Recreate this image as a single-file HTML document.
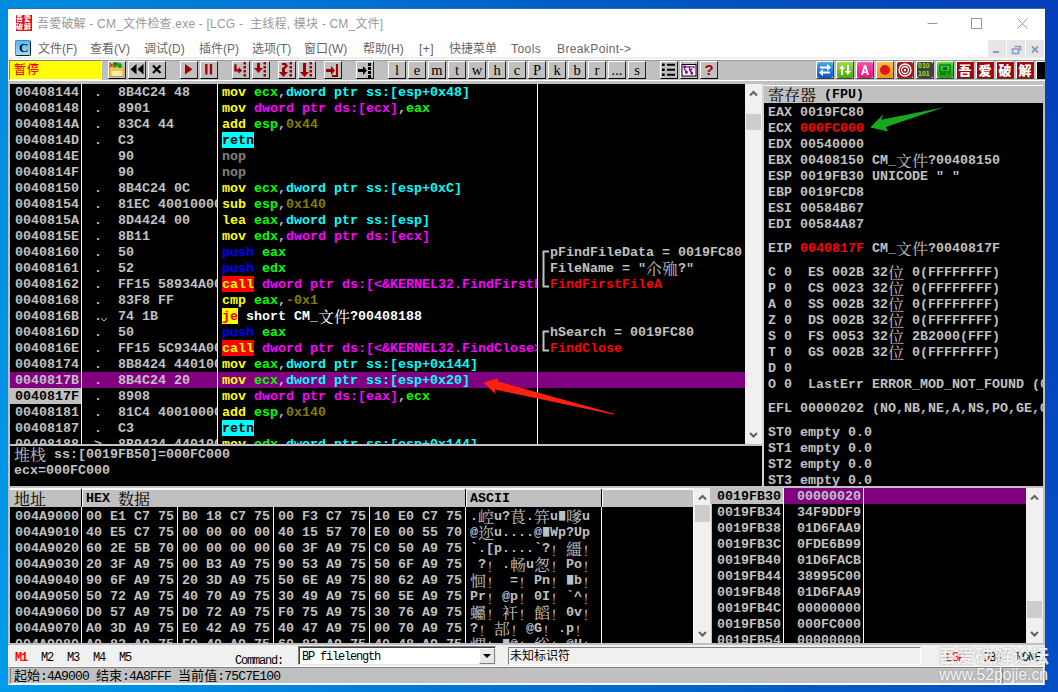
<!DOCTYPE html><html><head><meta charset="utf-8"><title>OllyDbg</title><style>
html,body{margin:0;padding:0}
body{width:1058px;height:692px;overflow:hidden;position:relative;background:linear-gradient(180deg,rgba(0,0,80,.07),rgba(0,255,255,.07)),linear-gradient(92deg,#0096ea 0%,#007bdb 30%,#0062cb 55%,#044dc2 80%,#0442c2 100%);font-family:"Liberation Sans","Noto Sans CJK SC",sans-serif}
div,span,svg{position:absolute;box-sizing:border-box}
.t{font-family:"Liberation Mono","Noto Serif CJK SC",monospace;font-weight:bold;font-size:13.33px;line-height:18px;height:16px;white-space:pre;color:#c0c0c0;overflow:hidden}
.t span{position:static;display:inline-block;vertical-align:top;height:16px;line-height:18px}
.t .cj{font-family:"Noto Serif CJK SC","Noto Sans CJK SC",serif;font-weight:400;font-size:16px;line-height:17px;width:16px;text-align:center}
.y{color:#ffff00}.g{color:#00ff00}.c{color:#00ffff}.m{color:#ff00ff}.o{color:#808000}.r{color:#ff0000}.b{color:#0000ff}.n{color:#808080}.w{color:#c0c0c0}.k{color:#000}.wh{color:#fff}
.ret{background:#00ffff;color:#000}.call{background:#ff0000;color:#ffff00}.je{background:#ffff00;color:#ff0000}
.pane{background:#000;overflow:hidden}
.vl{width:1px;background:#fff}
.hd{background:#c0c0c0;overflow:hidden}
.sb{background:#f0f0f0}
.th{background:#cdcdcd}
.btn{background:#c0c0c0;border-top:1px solid #fff;border-left:1px solid #fff;border-bottom:1px solid #000;border-right:1px solid #202020;width:18px;height:18px;top:61px;overflow:hidden}
.lt{font-family:"Liberation Serif",serif;font-size:14.5px;line-height:16px;color:#000;width:16px;text-align:center;left:0;top:0}
.menu{font-size:12px;line-height:16px;color:#666;top:41px;white-space:pre}
.ss{font-family:"Liberation Mono","Noto Serif CJK SC",monospace;white-space:pre;color:#000}
</style></head><body><div style="left:8px;top:8px;width:1037px;height:677px;background:#fff;border-top:1px solid #2a6db0"></div><div style="left:16px;top:15px;width:16px;height:16px;background:#e01010;overflow:hidden"><span style="left:0;top:0;font-size:7px;line-height:8px;color:#fff;font-weight:bold;width:16px;letter-spacing:1px">吾愛破解</span></div><div style="left:37px;top:16px;font-size:12px;line-height:16px;color:#999;white-space:pre;letter-spacing:.2px" id="title">吾愛破解 - CM_文件检查.exe - [LCG -  主线程, 模块 - CM_文件]</div><svg style="left:920px;top:9px" width="125" height="30" viewBox="0 0 125 30"><path d="M7.5 14.5h10" stroke="#999" fill="none"/><rect x="51.5" y="9.5" width="10" height="10" stroke="#999" fill="none"/><path d="M97.5 9.5l10 10M107.5 9.5l-10 10" stroke="#999" fill="none"/></svg><div style="left:15px;top:40px;width:16px;height:16px;background:linear-gradient(#5bb8f0,#9fd8f8);border:1px solid #3a8fd0;border-radius:2px;border-bottom:1px solid #123;border-right:1px solid #123"><span style="left:3px;top:-1px;font-family:'Liberation Serif',serif;font-weight:bold;font-size:13px;line-height:16px;color:#012">C</span></div><div class="menu" style="left:38px">文件(F)</div><div class="menu" style="left:90px">查看(V)</div><div class="menu" style="left:144px">调试(D)</div><div class="menu" style="left:199px">插件(P)</div><div class="menu" style="left:252px">选项(T)</div><div class="menu" style="left:304px">窗口(W)</div><div class="menu" style="left:363px">帮助(H)</div><div class="menu" style="left:419px;letter-spacing:.5px">[+]</div><div class="menu" style="left:449px">快捷菜单</div><div class="menu" style="left:511px;letter-spacing:.45px">Tools</div><div class="menu" style="left:557px;letter-spacing:.38px">BreakPoint-&gt;</div><div style="left:988px;top:40px;width:18px;height:18px;background:#e6e6e6"></div><div style="left:1007px;top:40px;width:18px;height:18px;background:#e6e6e6"></div><div style="left:1026px;top:40px;width:18px;height:18px;background:#e6e6e6"></div><svg style="left:988px;top:40px" width="57" height="18" viewBox="0 0 57 18"><path d="M5 12h6" stroke="#8d9bbd" stroke-width="2" fill="none"/><path d="M26.5 6.5h6v4M24.5 9h6v4.5h-6z" stroke="#8d9bbd" stroke-width="1.6" fill="none"/><path d="M44 6.5l6 6M50 6.5l-6 6" stroke="#8d9bbd" stroke-width="2" fill="none"/></svg><div style="left:9px;top:57px;width:1036px;height:2px;background:#f0f0f0"></div><div style="left:9px;top:60px;width:1036px;height:21px;background:#c0c0c0;border-top:1px solid #9a9a9a;border-bottom:1px solid #fff"></div><div style="left:8px;top:81px;width:1037px;height:565px;background:#c0c0c0"></div><div style="left:9px;top:60px;width:93px;height:20px;background:#ffff00;border-top:1px solid #808080;border-left:1px solid #808080;border-bottom:1px solid #fff;border-right:1px solid #fff"><span style="left:4px;top:0;font-family:'Noto Sans CJK SC',sans-serif;font-weight:500;font-size:12px;line-height:16px;color:#ff0000;letter-spacing:1px;white-space:pre">暂停</span></div><div class="btn" style="left:108px"><svg style="left:0;top:0" width="16" height="16" viewBox="0 0 16 16"><path d="M0.5 6q0-1.5 1.5-1.5h10.5l2.5 2v6.5q0 1.5-1.5 1.5H2q-1.5 0-1.5-1.5z" fill="#f2c452" stroke="#c8942a" stroke-width=".8"/><path d="M3.2 9h9.3q1.2 0 1 1.2l-.5 2.6q-.2 1.2-1.4 1.2H4.3q-1.2 0-1.4-1.2l-.5-2.6Q2.2 9 3.2 9z" fill="#fce9ae"/><path d="M4 .3h4.2l1.3 1h2l1.3 1.5v2.2l-1 1H9.3l-.5-2H7.5L7 5.5H4.2v-2z" fill="#14a214"/><circle cx="6.2" cy="1.6" r=".7" fill="#000"/><path d="M.5 1l2 2-2 2M2.2 3h3" stroke="#f01010" stroke-width="1.2" fill="none"/></svg></div><div class="btn" style="left:128px"><svg style="left:0;top:0" width="16" height="16" viewBox="0 0 16 16"><path d="M7.5 2v10.5L1.5 7.25zM14.5 2v10.5L8.5 7.25z" fill="#000"/></svg></div><div class="btn" style="left:148px"><svg style="left:0;top:0" width="16" height="16" viewBox="0 0 16 16"><path d="M4 3.5l7.5 7.5M11.5 3.5l-7.5 7.5" stroke="#000" stroke-width="2.2"/></svg></div><div class="btn" style="left:180px"><svg style="left:0;top:0" width="16" height="16" viewBox="0 0 16 16"><path d="M4 2v10.5l7.5-5.25z" fill="#a00000"/></svg></div><div class="btn" style="left:200px"><svg style="left:0;top:0" width="16" height="16" viewBox="0 0 16 16"><rect x="4.2" y="2" width="2.3" height="10.5" fill="#a00000"/><rect x="8.8" y="2" width="2.3" height="10.5" fill="#a00000"/></svg></div><div class="btn" style="left:232px"><svg style="left:0;top:0" width="16" height="16" viewBox="0 0 16 16"><path d="M1.3 2.2h2.3v5h2V5l3.5 3.4-3.5 3.4V9.5H1.3z" fill="#a00000"/><rect x="10.5" y="0" width="2.5" height="2.5" fill="#a00000"/><rect x="10.5" y="4" width="2.5" height="2.5" fill="#a00000"/><rect x="10.5" y="8" width="2.5" height="2.5" fill="#a00000"/><rect x="10.5" y="12" width="2.5" height="2.5" fill="#a00000"/></svg></div><div class="btn" style="left:252px"><svg style="left:0;top:0" width="16" height="16" viewBox="0 0 16 16"><path d="M4 1h3v5h3l-4.5 5L1 6h3z" fill="#a00000"/><rect x="10.5" y="0" width="2.5" height="2.5" fill="#a00000"/><rect x="10.5" y="4" width="2.5" height="2.5" fill="#a00000"/><rect x="10.5" y="8" width="2.5" height="2.5" fill="#a00000"/><rect x="10.5" y="12" width="2.5" height="2.5" fill="#a00000"/></svg></div><div class="btn" style="left:278px"><svg style="left:0;top:0" width="16" height="16" viewBox="0 0 16 16"><path d="M3 1h4l2 3-3 3v3h3l-4.5 5L0 10h3V6l3-2-1-1H3z" fill="#a00000"/><rect x="10.5" y="0" width="2.5" height="2.5" fill="#a00000"/><rect x="10.5" y="4" width="2.5" height="2.5" fill="#a00000"/><rect x="10.5" y="8" width="2.5" height="2.5" fill="#a00000"/><rect x="10.5" y="12" width="2.5" height="2.5" fill="#a00000"/></svg></div><div class="btn" style="left:298px"><svg style="left:0;top:0" width="16" height="16" viewBox="0 0 16 16"><path d="M4 1h3v9h3l-4.5 5L1 10h3z" fill="#a00000"/><rect x="10.5" y="0" width="2.5" height="2.5" fill="#a00000"/><rect x="10.5" y="4" width="2.5" height="2.5" fill="#a00000"/><rect x="10.5" y="8" width="2.5" height="2.5" fill="#a00000"/><rect x="10.5" y="12" width="2.5" height="2.5" fill="#a00000"/></svg></div><div class="btn" style="left:324px"><svg style="left:0;top:0" width="16" height="16" viewBox="0 0 16 16"><path d="M1 7h5V4l4 4.5L6 13v-3H1z" fill="#a00000"/><path d="M12 2v12H7" stroke="#a00000" stroke-width="2" fill="none"/></svg></div><div class="btn" style="left:356px"><svg style="left:0;top:0" width="16" height="16" viewBox="0 0 16 16"><path d="M1 7h5V4l4 4.5L6 13v-3H1z" fill="#000"/><rect x="11" y="1" width="3" height="3" fill="#000"/><rect x="11" y="5" width="3" height="3" fill="#000"/><rect x="11" y="9" width="3" height="3" fill="#000"/><rect x="11" y="13" width="3" height="3" fill="#000"/></svg></div><div class="btn" style="left:388px"><span class="lt">l</span></div><div class="btn" style="left:408px"><span class="lt">e</span></div><div class="btn" style="left:428px"><span class="lt">m</span></div><div class="btn" style="left:448px"><span class="lt">t</span></div><div class="btn" style="left:468px"><span class="lt">w</span></div><div class="btn" style="left:488px"><span class="lt">h</span></div><div class="btn" style="left:508px"><span class="lt">c</span></div><div class="btn" style="left:528px"><span class="lt">P</span></div><div class="btn" style="left:548px"><span class="lt">k</span></div><div class="btn" style="left:568px"><span class="lt">b</span></div><div class="btn" style="left:588px"><span class="lt">r</span></div><div class="btn" style="left:608px"><span class="lt">...</span></div><div class="btn" style="left:628px"><span class="lt">s</span></div><div class="btn" style="left:660px"><svg style="left:0;top:0" width="16" height="16" viewBox="0 0 16 16"><path d="M1 1.5h2.7v2.5H1zM1 6.5h2.7v2.5H1zM1 11.5h2.7v2.5H1zM6 1.8h8v2H6zM6 6.8h8v2H6zM6 11.8h8v2H6z" fill="#000"/></svg></div><div class="btn" style="left:680px"><svg style="left:0;top:0" width="16" height="16" viewBox="0 0 16 16"><rect x="1" y="2.5" width="14" height="11.5" fill="#fff" stroke="#000" stroke-width="1"/><path d="M1 0.5h14" stroke="#707070" stroke-width="1" stroke-dasharray="1 12"/><path d="M2.3 3.5h2.5v2.5H2.3zM4.2 9h2.5v2.7H4.2zM9.5 9.8h2.5v2.7H9.5z" fill="#900090"/><path d="M3.5 5v2.5l2 2M4 4.8h9v1.5M8.5 4.8v3.2l2.2 2.5M8.5 7.5h3" stroke="#900090" stroke-width="1.3" fill="none"/></svg></div><div class="btn" style="left:700px"><span class="lt" style="color:#a00000;font-family:'Liberation Sans',sans-serif;font-weight:bold;font-size:15px;top:0">?</span></div><div style="left:816px;top:61px;width:18px;height:18px;border-bottom:1px solid #404040;border-right:1px solid #404040;border-top:1px solid #fff;border-left:1px solid #fff;overflow:hidden"><div style="left:0;top:0;width:16px;height:16px;border-radius:3px;background:linear-gradient(#4aa8f0,#0858c0)"></div><svg style="left:0;top:0" width="16" height="16" viewBox="0 0 16 16"><path d="M3 5.5h7V3l4 3.5-4 3.5V7.5H3zM13 10.5H6V8l-4 3.5L6 15v-2.5h7z" fill="#fff" transform="translate(0,-1)"/></svg></div><div style="left:836px;top:61px;width:18px;height:18px;border-bottom:1px solid #404040;border-right:1px solid #404040;border-top:1px solid #fff;border-left:1px solid #fff;overflow:hidden"><div style="left:0;top:0;width:16px;height:16px;border-radius:3px;background:linear-gradient(#9be040,#48a808)"></div><svg style="left:0;top:0" width="16" height="16" viewBox="0 0 16 16"><path d="M5 3l3 4H6v6H4V7H2zM11 13l-3-4h2V3h2v6h2z" fill="#fff"/></svg></div><div style="left:856px;top:61px;width:18px;height:18px;border-bottom:1px solid #404040;border-right:1px solid #404040;border-top:1px solid #fff;border-left:1px solid #fff;overflow:hidden"><div style="left:0;top:0;width:16px;height:16px;border-radius:3px;background:linear-gradient(#ff50a8,#e81080)"></div><svg style="left:0;top:0" width="16" height="16" viewBox="0 0 16 16"><path d="M4 13L7 3h2l3 10h-2l-.6-2H6.6L6 13zM7 9.5h2L8 5.5z" fill="#fff"/></svg></div><div style="left:876px;top:61px;width:18px;height:18px;border-bottom:1px solid #404040;border-right:1px solid #404040;border-top:1px solid #fff;border-left:1px solid #fff;overflow:hidden"><div style="left:0;top:0;width:16px;height:16px;border-radius:3px;background:linear-gradient(#ffc040,#f09018)"></div><svg style="left:0;top:0" width="16" height="16" viewBox="0 0 16 16"><circle cx="8" cy="8" r="5" fill="#e01818"/></svg></div><div style="left:896px;top:61px;width:18px;height:18px;border-bottom:1px solid #404040;border-right:1px solid #404040;border-top:1px solid #fff;border-left:1px solid #fff;overflow:hidden"><div style="left:0;top:0;width:16px;height:16px;border-radius:3px;background:#a81818"></div><svg style="left:0;top:0" width="16" height="16" viewBox="0 0 16 16"><circle cx="8" cy="8" r="6" fill="none" stroke="#fff" stroke-width="1.3"/><circle cx="8" cy="8" r="3.5" fill="none" stroke="#fff" stroke-width="1.3"/><circle cx="8" cy="8" r="1.2" fill="#fff"/></svg></div><div style="left:916px;top:61px;width:18px;height:18px;border-bottom:1px solid #404040;border-right:1px solid #404040;border-top:1px solid #fff;border-left:1px solid #fff;overflow:hidden"><div style="left:0;top:0;width:16px;height:16px;border-radius:3px;background:#404040"></div><span style="left:1px;top:0;font-family:'Liberation Sans',sans-serif;font-weight:bold;font-size:7px;line-height:8px;color:#a0e020;white-space:pre">010<br>101</span></div><div style="left:936px;top:61px;width:18px;height:18px;border-bottom:1px solid #404040;border-right:1px solid #404040;border-top:1px solid #fff;border-left:1px solid #fff;overflow:hidden"><div style="left:0;top:0;width:16px;height:16px;border-radius:3px;background:linear-gradient(#50e020,#18a008)"></div><svg style="left:0;top:0" width="16" height="16" viewBox="0 0 16 16"><rect x="3" y="3" width="10" height="7" fill="none" stroke="#063" stroke-width="1.2"/><rect x="6" y="5" width="4" height="3" fill="#063"/><path d="M3 12h6M11 12h2" stroke="#063" stroke-width="1.5"/></svg></div><div style="left:956px;top:61px;width:18px;height:18px;border-bottom:1px solid #404040;border-right:1px solid #404040;border-top:1px solid #fff;border-left:1px solid #fff;overflow:hidden"><div style="left:0;top:0;width:16px;height:16px;background:#a00808"></div><span style="left:1.5px;top:0;font-family:'Noto Sans CJK SC',sans-serif;font-weight:900;font-size:13px;line-height:16px;color:#fff">吾</span></div><div style="left:976px;top:61px;width:18px;height:18px;border-bottom:1px solid #404040;border-right:1px solid #404040;border-top:1px solid #fff;border-left:1px solid #fff;overflow:hidden"><div style="left:0;top:0;width:16px;height:16px;background:#a00808"></div><span style="left:1.5px;top:0;font-family:'Noto Sans CJK SC',sans-serif;font-weight:900;font-size:13px;line-height:16px;color:#fff">爱</span></div><div style="left:996px;top:61px;width:18px;height:18px;border-bottom:1px solid #404040;border-right:1px solid #404040;border-top:1px solid #fff;border-left:1px solid #fff;overflow:hidden"><div style="left:0;top:0;width:16px;height:16px;background:#a00808"></div><span style="left:1.5px;top:0;font-family:'Noto Sans CJK SC',sans-serif;font-weight:900;font-size:13px;line-height:16px;color:#fff">破</span></div><div style="left:1016px;top:61px;width:18px;height:18px;border-bottom:1px solid #404040;border-right:1px solid #404040;border-top:1px solid #fff;border-left:1px solid #fff;overflow:hidden"><div style="left:0;top:0;width:16px;height:16px;background:#a00808"></div><span style="left:1.5px;top:0;font-family:'Noto Sans CJK SC',sans-serif;font-weight:900;font-size:13px;line-height:16px;color:#fff">解</span></div><div style="left:1036px;top:61px;width:9px;height:18px;background:#000;border-top:1px solid #fff;border-left:1px solid #fff"></div><div class="pane" style="left:10px;top:84px;width:735px;height:360px"></div><div style="left:10px;top:372px;width:735px;height:16px;background:#800080"></div><div style="left:10px;top:388px;width:71px;height:16px;background:#c0c0c0"></div><div class="t" style="left:15px;top:84px;width:66px;height:16px;">00408144</div><div class="t" style="left:86px;top:84px;width:131px;height:16px;"> .  8B4C24 48</div><div class="t" style="left:222px;top:84px;width:315px;height:16px;"><span class="y">mov </span><span class="g">ecx</span><span class="w">,</span><span class="c">dword ptr ss:[esp+0x48]</span></div><div class="t" style="left:15px;top:100px;width:66px;height:16px;">00408148</div><div class="t" style="left:86px;top:100px;width:131px;height:16px;"> .  8901</div><div class="t" style="left:222px;top:100px;width:315px;height:16px;"><span class="y">mov </span><span class="m">dword ptr ds:[ecx]</span><span class="w">,</span><span class="g">eax</span></div><div class="t" style="left:15px;top:116px;width:66px;height:16px;">0040814A</div><div class="t" style="left:86px;top:116px;width:131px;height:16px;"> .  83C4 44</div><div class="t" style="left:222px;top:116px;width:315px;height:16px;"><span class="y">add </span><span class="g">esp</span><span class="w">,</span><span class="o">0x44</span></div><div class="t" style="left:15px;top:132px;width:66px;height:16px;">0040814D</div><div class="t" style="left:86px;top:132px;width:131px;height:16px;"> .  C3</div><div class="t" style="left:222px;top:132px;width:315px;height:16px;"><span class="ret">retn</span></div><div class="t" style="left:15px;top:148px;width:66px;height:16px;">0040814E</div><div class="t" style="left:86px;top:148px;width:131px;height:16px;">    90</div><div class="t" style="left:222px;top:148px;width:315px;height:16px;"><span class="n">nop</span></div><div class="t" style="left:15px;top:164px;width:66px;height:16px;">0040814F</div><div class="t" style="left:86px;top:164px;width:131px;height:16px;">    90</div><div class="t" style="left:222px;top:164px;width:315px;height:16px;"><span class="n">nop</span></div><div class="t" style="left:15px;top:180px;width:66px;height:16px;">00408150</div><div class="t" style="left:86px;top:180px;width:131px;height:16px;"> .  8B4C24 0C</div><div class="t" style="left:222px;top:180px;width:315px;height:16px;"><span class="y">mov </span><span class="g">ecx</span><span class="w">,</span><span class="c">dword ptr ss:[esp+0xC]</span></div><div class="t" style="left:15px;top:196px;width:66px;height:16px;">00408154</div><div class="t" style="left:86px;top:196px;width:131px;height:16px;"> .  81EC 40010000</div><div class="t" style="left:222px;top:196px;width:315px;height:16px;"><span class="y">sub </span><span class="g">esp</span><span class="w">,</span><span class="o">0x140</span></div><div class="t" style="left:15px;top:212px;width:66px;height:16px;">0040815A</div><div class="t" style="left:86px;top:212px;width:131px;height:16px;"> .  8D4424 00</div><div class="t" style="left:222px;top:212px;width:315px;height:16px;"><span class="y">lea </span><span class="g">eax</span><span class="w">,</span><span class="c">dword ptr ss:[esp]</span></div><div class="t" style="left:15px;top:228px;width:66px;height:16px;">0040815E</div><div class="t" style="left:86px;top:228px;width:131px;height:16px;"> .  8B11</div><div class="t" style="left:222px;top:228px;width:315px;height:16px;"><span class="y">mov </span><span class="g">edx</span><span class="w">,</span><span class="m">dword ptr ds:[ecx]</span></div><div class="t" style="left:15px;top:244px;width:66px;height:16px;">00408160</div><div class="t" style="left:86px;top:244px;width:131px;height:16px;"> .  50</div><div class="t" style="left:222px;top:244px;width:315px;height:16px;"><span class="b">push </span><span class="g">eax</span></div><div class="t" style="left:15px;top:260px;width:66px;height:16px;">00408161</div><div class="t" style="left:86px;top:260px;width:131px;height:16px;"> .  52</div><div class="t" style="left:222px;top:260px;width:315px;height:16px;"><span class="b">push </span><span class="g">edx</span></div><div class="t" style="left:15px;top:276px;width:66px;height:16px;">00408162</div><div class="t" style="left:86px;top:276px;width:131px;height:16px;"> .  FF15 58934A00</div><div class="t" style="left:222px;top:276px;width:315px;height:16px;"><span class="call">call</span><span class="m"> dword ptr ds:[&lt;&amp;KERNEL32.FindFirstFileA&gt;]</span></div><div class="t" style="left:15px;top:292px;width:66px;height:16px;">00408168</div><div class="t" style="left:86px;top:292px;width:131px;height:16px;"> .  83F8 FF</div><div class="t" style="left:222px;top:292px;width:315px;height:16px;"><span class="y">cmp </span><span class="g">eax</span><span class="w">,</span><span class="o">-0x1</span></div><div class="t" style="left:15px;top:308px;width:66px;height:16px;">0040816B</div><div class="t" style="left:86px;top:308px;width:131px;height:16px;"> .  74 1B</div><div class="t" style="left:222px;top:308px;width:315px;height:16px;"><span class="je">je</span><span class="wh"> short CM_<span class="cj">文</span><span class="cj">件</span>?00408188</span></div><div class="t" style="left:15px;top:324px;width:66px;height:16px;">0040816D</div><div class="t" style="left:86px;top:324px;width:131px;height:16px;"> .  50</div><div class="t" style="left:222px;top:324px;width:315px;height:16px;"><span class="b">push </span><span class="g">eax</span></div><div class="t" style="left:15px;top:340px;width:66px;height:16px;">0040816E</div><div class="t" style="left:86px;top:340px;width:131px;height:16px;"> .  FF15 5C934A00</div><div class="t" style="left:222px;top:340px;width:315px;height:16px;"><span class="call">call</span><span class="m"> dword ptr ds:[&lt;&amp;KERNEL32.FindClose&gt;]</span></div><div class="t" style="left:15px;top:356px;width:66px;height:16px;">00408174</div><div class="t" style="left:86px;top:356px;width:131px;height:16px;"> .  8B8424 44010000</div><div class="t" style="left:222px;top:356px;width:315px;height:16px;"><span class="y">mov </span><span class="g">eax</span><span class="w">,</span><span class="c">dword ptr ss:[esp+0x144]</span></div><div class="t" style="left:15px;top:372px;width:66px;height:16px;">0040817B</div><div class="t" style="left:86px;top:372px;width:131px;height:16px;"> .  8B4C24 20</div><div class="t" style="left:222px;top:372px;width:315px;height:16px;"><span class="y">mov </span><span class="g">ecx</span><span class="w">,</span><span class="c">dword ptr ss:[esp+0x20]</span></div><div class="t" style="left:15px;top:388px;width:66px;height:16px;"><span class="k">0040817F</span></div><div class="t" style="left:86px;top:388px;width:131px;height:16px;"> .  8908</div><div class="t" style="left:222px;top:388px;width:315px;height:16px;"><span class="y">mov </span><span class="m">dword ptr ds:[eax]</span><span class="w">,</span><span class="g">ecx</span></div><div class="t" style="left:15px;top:404px;width:66px;height:16px;">00408181</div><div class="t" style="left:86px;top:404px;width:131px;height:16px;"> .  81C4 40010000</div><div class="t" style="left:222px;top:404px;width:315px;height:16px;"><span class="y">add </span><span class="g">esp</span><span class="w">,</span><span class="o">0x140</span></div><div class="t" style="left:15px;top:420px;width:66px;height:16px;">00408187</div><div class="t" style="left:86px;top:420px;width:131px;height:16px;"> .  C3</div><div class="t" style="left:222px;top:420px;width:315px;height:16px;"><span class="ret">retn</span></div><div class="t" style="left:15px;top:436px;width:66px;height:8px;">00408188</div><div class="t" style="left:86px;top:436px;width:131px;height:8px;"> &gt;  8B9424 44010000</div><div class="t" style="left:222px;top:436px;width:315px;height:8px;"><span class="y">mov </span><span class="g">edx</span><span class="w">,</span><span class="c">dword ptr ss:[esp+0x144]</span></div><svg style="left:100px;top:309px" width="8" height="16" viewBox="0 0 8 16"><path d="M1 9l3 3 3-3" stroke="#c0c0c0" fill="none"/></svg><svg style="left:542px;top:244px" width="8" height="48" viewBox="0 0 8 48"><path d="M7 7.5H1.5V42.5H7" stroke="#c0c0c0" stroke-width="2" fill="none"/></svg><div class="t" style="left:550px;top:244px;width:195px;">pFindFileData = 0019FC80</div><div class="t" style="left:550px;top:260px;width:195px;">FileName = &quot;<span class="cj">尒</span><span class="cj">殈</span>?&quot;</div><div class="t" style="left:550px;top:276px;width:195px;"><span class="r">FindFirstFileA</span></div><svg style="left:542px;top:324px" width="8" height="32" viewBox="0 0 8 32"><path d="M7 7.5H1.5V26.5H7" stroke="#c0c0c0" stroke-width="2" fill="none"/></svg><div class="t" style="left:550px;top:324px;width:195px;">hSearch = 0019FC80</div><div class="t" style="left:550px;top:340px;width:195px;"><span class="r">FindClose</span></div><div class="vl" style="left:81px;top:84px;height:360px"></div><div class="vl" style="left:217px;top:84px;height:360px"></div><div class="vl" style="left:537px;top:84px;height:360px"></div><div class="sb" style="left:745px;top:84px;width:17px;height:360px"></div><div class="th" style="left:746px;top:114px;width:15px;height:16px"></div><svg style="left:745px;top:84px" width="17" height="17" viewBox="0 0 17 17"><path d="M5 11.5l3.5-3.5 3.5 3.5" stroke="#606060" stroke-width="2" fill="none"/></svg><svg style="left:745px;top:427px" width="17" height="17" viewBox="0 0 17 17"><path d="M5 6l3.5 3.5 3.5-3.5" stroke="#606060" stroke-width="2" fill="none"/></svg><div class="pane" style="left:10px;top:446px;width:752px;height:40px"></div><div class="t" style="left:14px;top:446px;"><span class="cj">堆</span><span class="cj">栈</span> ss:[0019FB50]=000FC000</div><div class="t" style="left:14px;top:462px;">ecx=000FC000</div><div style="left:762px;top:84px;width:2px;height:402px;background:#d4d4d4"></div><div class="hd" style="left:764px;top:85px;width:279px;height:18px;border-top:1px solid #fff"></div><div class="t" style="left:768px;top:86px;"><span class="k"><span class="cj">寄</span><span class="cj">存</span><span class="cj">器</span> (FPU)</span></div><div class="pane" style="left:764px;top:103px;width:279px;height:383px"></div><div class="t" style="left:768px;top:104px;width:275px;height:16px;"><span class="w">EAX 0019FC80</span></div><div class="t" style="left:768px;top:120px;width:275px;height:16px;"><span class="w">ECX </span><span class="r">000FC000</span></div><div class="t" style="left:768px;top:136px;width:275px;height:16px;"><span class="w">EDX 00540000</span></div><div class="t" style="left:768px;top:152px;width:275px;height:16px;"><span class="w">EBX 00408150 CM_<span class="cj">文</span><span class="cj">件</span>?00408150</span></div><div class="t" style="left:768px;top:168px;width:275px;height:16px;"><span class="w">ESP 0019FB30 UNICODE &quot; &quot;</span></div><div class="t" style="left:768px;top:184px;width:275px;height:16px;"><span class="w">EBP 0019FCD8</span></div><div class="t" style="left:768px;top:200px;width:275px;height:16px;"><span class="w">ESI 00584B67</span></div><div class="t" style="left:768px;top:216px;width:275px;height:16px;"><span class="w">EDI 00584A87</span></div><div class="t" style="left:768px;top:240px;width:275px;height:16px;"><span class="w">EIP </span><span class="r">0040817F</span><span class="w"> CM_<span class="cj">文</span><span class="cj">件</span>?0040817F</span></div><div class="t" style="left:768px;top:264px;width:275px;height:16px;"><span class="w">C 0  ES 002B 32<span class="cj">位</span> 0(FFFFFFFF)</span></div><div class="t" style="left:768px;top:280px;width:275px;height:16px;"><span class="w">P 0  CS 0023 32<span class="cj">位</span> 0(FFFFFFFF)</span></div><div class="t" style="left:768px;top:296px;width:275px;height:16px;"><span class="w">A 0  SS 002B 32<span class="cj">位</span> 0(FFFFFFFF)</span></div><div class="t" style="left:768px;top:312px;width:275px;height:16px;"><span class="w">Z 0  DS 002B 32<span class="cj">位</span> 0(FFFFFFFF)</span></div><div class="t" style="left:768px;top:328px;width:275px;height:16px;"><span class="w">S 0  FS 0053 32<span class="cj">位</span> 2B2000(FFF)</span></div><div class="t" style="left:768px;top:344px;width:275px;height:16px;"><span class="w">T 0  GS 002B 32<span class="cj">位</span> 0(FFFFFFFF)</span></div><div class="t" style="left:768px;top:360px;width:275px;height:16px;"><span class="w">D 0</span></div><div class="t" style="left:768px;top:376px;width:275px;height:16px;"><span class="w">O 0  LastErr ERROR_MOD_NOT_FOUND (0000007E)</span></div><div class="t" style="left:768px;top:400px;width:275px;height:16px;"><span class="w">EFL 00000202 (NO,NB,NE,A,NS,PO,GE,G)</span></div><div class="t" style="left:768px;top:424px;width:275px;height:16px;"><span class="w">ST0 empty 0.0</span></div><div class="t" style="left:768px;top:440px;width:275px;height:16px;"><span class="w">ST1 empty 0.0</span></div><div class="t" style="left:768px;top:456px;width:275px;height:16px;"><span class="w">ST2 empty 0.0</span></div><div class="t" style="left:768px;top:472px;width:275px;height:14px;"><span class="w">ST3 empty 0.0</span></div><div class="hd" style="left:10px;top:488px;width:684px;height:19px;border-top:2px solid #fff"></div><div class="pane" style="left:10px;top:507px;width:684px;height:136px"></div><div class="t" style="left:14px;top:490px;"><span class="k"><span class="cj">地</span><span class="cj">址</span></span></div><div class="t" style="left:86px;top:490px;"><span class="k">HEX <span class="cj">数</span><span class="cj">据</span></span></div><div class="t" style="left:470px;top:490px;"><span class="k">ASCII</span></div><div style="left:81px;top:489px;width:1px;height:18px;background:#000"></div><div style="left:82px;top:489px;width:1px;height:18px;background:#fff"></div><div class="vl" style="left:81px;top:507px;height:136px"></div><div style="left:465px;top:489px;width:1px;height:18px;background:#000"></div><div style="left:466px;top:489px;width:1px;height:18px;background:#fff"></div><div class="vl" style="left:465px;top:507px;height:136px"></div><div style="left:601px;top:489px;width:1px;height:18px;background:#000"></div><div style="left:602px;top:489px;width:1px;height:18px;background:#fff"></div><div class="vl" style="left:601px;top:507px;height:136px"></div><div style="left:177px;top:507px;width:1px;height:136px;background:#fff8e0"></div><div style="left:273px;top:507px;width:1px;height:136px;background:#fff8e0"></div><div style="left:369px;top:507px;width:1px;height:136px;background:#fff8e0"></div><div class="t" style="left:15px;top:508px;width:66px;height:16px;">004A9000</div><div class="t" style="left:86px;top:508px;width:379px;height:16px;">00 E1 C7 75 B0 18 C7 75 00 F3 C7 75 10 E0 C7 75</div><div class="t" style="left:470px;top:508px;width:131px;height:16px;">.<span class="cj">崆</span>u?<span class="cj">茛</span>.<span class="cj">笄</span>u<span style="width:8px;text-align:center;font-size:8.5px;font-weight:normal;line-height:17px;transform:scaleX(1.2)">█</span><span class="cj">嗲</span>u</div><div class="t" style="left:15px;top:524px;width:66px;height:16px;">004A9010</div><div class="t" style="left:86px;top:524px;width:379px;height:16px;">40 E5 C7 75 00 00 00 00 40 15 57 70 E0 00 55 70</div><div class="t" style="left:470px;top:524px;width:131px;height:16px;">@<span class="cj">迩</span>u....@<span style="width:8px;text-align:center;font-size:8.5px;font-weight:normal;line-height:17px;transform:scaleX(1.2)">█</span>Wp?Up</div><div class="t" style="left:15px;top:540px;width:66px;height:16px;">004A9020</div><div class="t" style="left:86px;top:540px;width:379px;height:16px;">60 2E 5B 70 00 00 00 00 60 3F A9 75 C0 50 A9 75</div><div class="t" style="left:470px;top:540px;width:131px;height:16px;">`.[p....`?<span class="cj" style="margin-left:-4px;margin-right:4px">﹗</span><span class="cj">繮</span><span class="cj" style="margin-left:-4px;margin-right:4px">﹗</span></div><div class="t" style="left:15px;top:556px;width:66px;height:16px;">004A9030</div><div class="t" style="left:86px;top:556px;width:379px;height:16px;">20 3F A9 75 00 B3 A9 75 90 53 A9 75 50 6F A9 75</div><div class="t" style="left:470px;top:556px;width:131px;height:16px;"> ?<span class="cj" style="margin-left:-4px;margin-right:4px">﹗</span>.<span class="cj">畅</span>u<span class="cj">怱</span><span class="cj" style="margin-left:-4px;margin-right:4px">﹗</span>Po<span class="cj" style="margin-left:-4px;margin-right:4px">﹗</span></div><div class="t" style="left:15px;top:572px;width:66px;height:16px;">004A9040</div><div class="t" style="left:86px;top:572px;width:379px;height:16px;">90 6F A9 75 20 3D A9 75 50 6E A9 75 80 62 A9 75</div><div class="t" style="left:470px;top:572px;width:131px;height:16px;"><span class="cj">恛</span><span class="cj" style="margin-left:-4px;margin-right:4px">﹗</span> =<span class="cj" style="margin-left:-4px;margin-right:4px">﹗</span>Pn<span class="cj" style="margin-left:-4px;margin-right:4px">﹗</span><span style="width:8px;text-align:center;font-size:8.5px;font-weight:normal;line-height:17px;transform:scaleX(1.2)">█</span>b<span class="cj" style="margin-left:-4px;margin-right:4px">﹗</span></div><div class="t" style="left:15px;top:588px;width:66px;height:16px;">004A9050</div><div class="t" style="left:86px;top:588px;width:379px;height:16px;">50 72 A9 75 40 70 A9 75 30 49 A9 75 60 5E A9 75</div><div class="t" style="left:470px;top:588px;width:131px;height:16px;">Pr<span class="cj" style="margin-left:-4px;margin-right:4px">﹗</span>@p<span class="cj" style="margin-left:-4px;margin-right:4px">﹗</span>0I<span class="cj" style="margin-left:-4px;margin-right:4px">﹗</span>`^<span class="cj" style="margin-left:-4px;margin-right:4px">﹗</span></div><div class="t" style="left:15px;top:604px;width:66px;height:16px;">004A9060</div><div class="t" style="left:86px;top:604px;width:379px;height:16px;">D0 57 A9 75 D0 72 A9 75 F0 75 A9 75 30 76 A9 75</div><div class="t" style="left:470px;top:604px;width:131px;height:16px;"><span class="cj">蠾</span><span class="cj" style="margin-left:-4px;margin-right:4px">﹗</span><span class="cj">衦</span><span class="cj" style="margin-left:-4px;margin-right:4px">﹗</span><span class="cj">饀</span><span class="cj" style="margin-left:-4px;margin-right:4px">﹗</span>0v<span class="cj" style="margin-left:-4px;margin-right:4px">﹗</span></div><div class="t" style="left:15px;top:620px;width:66px;height:16px;">004A9070</div><div class="t" style="left:86px;top:620px;width:379px;height:16px;">A0 3D A9 75 E0 42 A9 75 40 47 A9 75 00 70 A9 75</div><div class="t" style="left:470px;top:620px;width:131px;height:16px;">?<span class="cj" style="margin-left:-4px;margin-right:4px">﹗</span><span class="cj">郆</span><span class="cj" style="margin-left:-4px;margin-right:4px">﹗</span>@G<span class="cj" style="margin-left:-4px;margin-right:4px">﹗</span>.p<span class="cj" style="margin-left:-4px;margin-right:4px">﹗</span></div><div class="t" style="left:15px;top:636px;width:66px;height:7px;">004A9080</div><div class="t" style="left:86px;top:636px;width:379px;height:7px;">A0 82 A9 75 E0 40 A9 75 60 83 A9 75 40 48 A9 75</div><div class="t" style="left:470px;top:636px;width:131px;height:7px;"><span class="cj">煟</span><span class="cj" style="margin-left:-4px;margin-right:4px">﹗</span><span style="width:8px;text-align:center;font-size:8.5px;font-weight:normal;line-height:17px;transform:scaleX(1.2)">█</span>@<span class="cj" style="margin-left:-4px;margin-right:4px">﹗</span><span class="cj">绤</span><span class="cj" style="margin-left:-4px;margin-right:4px">﹗</span>@H<span class="cj" style="margin-left:-4px;margin-right:4px">﹗</span></div><div style="left:693px;top:488px;width:1px;height:155px;background:#fff"></div><div class="sb" style="left:694px;top:488px;width:17px;height:155px"></div><div class="th" style="left:695px;top:505px;width:15px;height:17px"></div><svg style="left:694px;top:488px" width="17" height="17" viewBox="0 0 17 17"><path d="M5 11.5l3.5-3.5 3.5 3.5" stroke="#606060" stroke-width="2" fill="none"/></svg><svg style="left:694px;top:626px" width="17" height="17" viewBox="0 0 17 17"><path d="M5 6l3.5 3.5 3.5-3.5" stroke="#606060" stroke-width="2" fill="none"/></svg><div class="pane" style="left:712px;top:488px;width:314px;height:155px"></div><div style="left:710px;top:486px;width:73px;height:18px;background:#c0c0c0"></div><div style="left:784px;top:488px;width:242px;height:16px;background:#800080"></div><div class="t" style="left:717px;top:488px;width:66px;height:16px;"><span class="k">0019FB30</span></div><div class="t" style="left:797px;top:488px;width:66px;height:16px;">00000020</div><div class="t" style="left:717px;top:504px;width:66px;height:16px;"><span class="w">0019FB34</span></div><div class="t" style="left:797px;top:504px;width:66px;height:16px;">34F9DDF9</div><div class="t" style="left:717px;top:520px;width:66px;height:16px;"><span class="w">0019FB38</span></div><div class="t" style="left:797px;top:520px;width:66px;height:16px;">01D6FAA9</div><div class="t" style="left:717px;top:536px;width:66px;height:16px;"><span class="w">0019FB3C</span></div><div class="t" style="left:797px;top:536px;width:66px;height:16px;">0FDE6B99</div><div class="t" style="left:717px;top:552px;width:66px;height:16px;"><span class="w">0019FB40</span></div><div class="t" style="left:797px;top:552px;width:66px;height:16px;">01D6FACB</div><div class="t" style="left:717px;top:568px;width:66px;height:16px;"><span class="w">0019FB44</span></div><div class="t" style="left:797px;top:568px;width:66px;height:16px;">38995C00</div><div class="t" style="left:717px;top:584px;width:66px;height:16px;"><span class="w">0019FB48</span></div><div class="t" style="left:797px;top:584px;width:66px;height:16px;">01D6FAA9</div><div class="t" style="left:717px;top:600px;width:66px;height:16px;"><span class="w">0019FB4C</span></div><div class="t" style="left:797px;top:600px;width:66px;height:16px;">00000000</div><div class="t" style="left:717px;top:616px;width:66px;height:16px;"><span class="w">0019FB50</span></div><div class="t" style="left:797px;top:616px;width:66px;height:16px;">000FC000</div><div class="t" style="left:717px;top:632px;width:66px;height:11px;"><span class="w">0019FB54</span></div><div class="t" style="left:797px;top:632px;width:66px;height:11px;">00000000</div><div class="vl" style="left:783px;top:488px;height:155px"></div><div class="vl" style="left:863px;top:488px;height:155px"></div><div class="sb" style="left:1026px;top:488px;width:17px;height:155px"></div><div class="th" style="left:1027px;top:601px;width:15px;height:17px"></div><svg style="left:1026px;top:488px" width="17" height="17" viewBox="0 0 17 17"><path d="M5 11.5l3.5-3.5 3.5 3.5" stroke="#606060" stroke-width="2" fill="none"/></svg><svg style="left:1026px;top:626px" width="17" height="17" viewBox="0 0 17 17"><path d="M5 6l3.5 3.5 3.5-3.5" stroke="#606060" stroke-width="2" fill="none"/></svg><div style="left:9px;top:645px;width:1035px;height:21px;background:#f0f0f0"></div><div class="ss" style="left:15px;top:651px;font-size:12px;letter-spacing:-1.2px;line-height:14px;color:#ff0000;font-weight:bold">M1</div><div class="ss" style="left:41px;top:651px;font-size:12px;letter-spacing:-1.2px;line-height:14px;">M2</div><div class="ss" style="left:67px;top:651px;font-size:12px;letter-spacing:-1.2px;line-height:14px;">M3</div><div class="ss" style="left:93px;top:651px;font-size:12px;letter-spacing:-1.2px;line-height:14px;">M4</div><div class="ss" style="left:119px;top:651px;font-size:12px;letter-spacing:-1.2px;line-height:14px;">M5</div><div class="ss" style="left:235px;top:654px;font-size:12px;letter-spacing:-1.2px;line-height:14px">Command:</div><div style="left:298px;top:646px;width:198px;height:19px;background:#fff;border-top:1px solid #808080;border-left:1px solid #808080;border-bottom:1px solid #e8e8e8;border-right:1px solid #e8e8e8"><div style="left:0;top:0;width:196px;height:17px;border-top:1px solid #404040;border-left:1px solid #404040"></div><span class="ss" style="left:3px;top:3px;font-size:12px;letter-spacing:-1.2px;line-height:14px">BP filelength</span><div style="left:180px;top:1px;width:16px;height:16px;background:#e8e8e8;border-bottom:1px solid #808080;border-right:1px solid #808080;border-top:1px solid #fff;border-left:1px solid #fff"></div><svg style="left:180px;top:1px" width="16" height="16" viewBox="0 0 16 16"><path d="M4 6h8l-4 4z" fill="#000"/></svg></div><div style="left:508px;top:647px;width:413px;height:18px;border-top:1px solid #808080;border-left:1px solid #808080;border-bottom:1px solid #fff;border-right:1px solid #fff"><span style="left:1px;top:-1px;font-family:'Noto Sans CJK SC',sans-serif;font-weight:400;font-size:12px;line-height:16px;color:#000;white-space:pre">未知标识符</span></div><div class="ss" style="left:946px;top:651px;font-size:12px;letter-spacing:-1.2px;line-height:14px;color:#ff0000">ESP</div><div class="ss" style="left:983px;top:651px;font-size:12px;letter-spacing:-1.2px;line-height:14px;color:#000">DBG</div><div class="ss" style="left:1016px;top:651px;font-size:12px;letter-spacing:-1.2px;line-height:14px;color:#000">NONE</div><div style="left:8px;top:666px;width:1037px;height:19px;background:#c0c0c0;border-top:1px solid #fff;border-bottom:1px solid #fff"></div><div style="left:10px;top:667px;width:991px;height:17px;border-top:1px solid #808080;border-left:1px solid #808080;border-bottom:1px solid #fff;border-right:1px solid #fff"></div><div style="left:1002px;top:667px;width:42px;height:17px;border-top:1px solid #808080;border-left:1px solid #808080;border-bottom:1px solid #fff;border-right:1px solid #fff"></div><div class="ss" id="status" style="left:14px;top:667px;font-size:13px;letter-spacing:-0.8px;line-height:16px"><span style="position:static;letter-spacing:0;font-family:'Noto Sans CJK SC',sans-serif">起</span><span style="position:static;letter-spacing:0;font-family:'Noto Sans CJK SC',sans-serif">始</span>:4A9000 <span style="position:static;letter-spacing:0;font-family:'Noto Sans CJK SC',sans-serif">结</span><span style="position:static;letter-spacing:0;font-family:'Noto Sans CJK SC',sans-serif">束</span>:4A8FFF <span style="position:static;letter-spacing:0;font-family:'Noto Sans CJK SC',sans-serif">当</span><span style="position:static;letter-spacing:0;font-family:'Noto Sans CJK SC',sans-serif">前</span><span style="position:static;letter-spacing:0;font-family:'Noto Sans CJK SC',sans-serif">值</span>:75C7E100</div><svg style="left:0;top:0" width="1058" height="692" viewBox="0 0 1058 692"><polygon points="483.3,382.4 498.4,378.2 497.2,381.2 615,414 613,414.6 495,389.5 495.4,394" fill="#ff2010"/><polygon points="870.3,127.4 883.3,114.2 881.2,119.7 944.1,107.3 885.9,127 888,131.6" fill="#18a81c"/></svg><div style="left:938px;top:642px;font-family:'Noto Sans CJK SC',sans-serif;font-weight:700;font-size:18.5px;line-height:26px;color:rgba(255,255,255,.85);text-shadow:0 0 2px rgba(0,0,0,.35);white-space:pre" id="wm1">吾爱破解论坛</div><div style="left:939px;top:663px;font-family:'Liberation Sans',sans-serif;font-size:15.7px;line-height:24px;color:rgba(255,255,255,.85);text-shadow:0 0 2px rgba(0,0,0,.35),0 0 1px rgba(255,255,255,.6);white-space:pre" id="wm2">www.52pojie.cn</div></body></html>
